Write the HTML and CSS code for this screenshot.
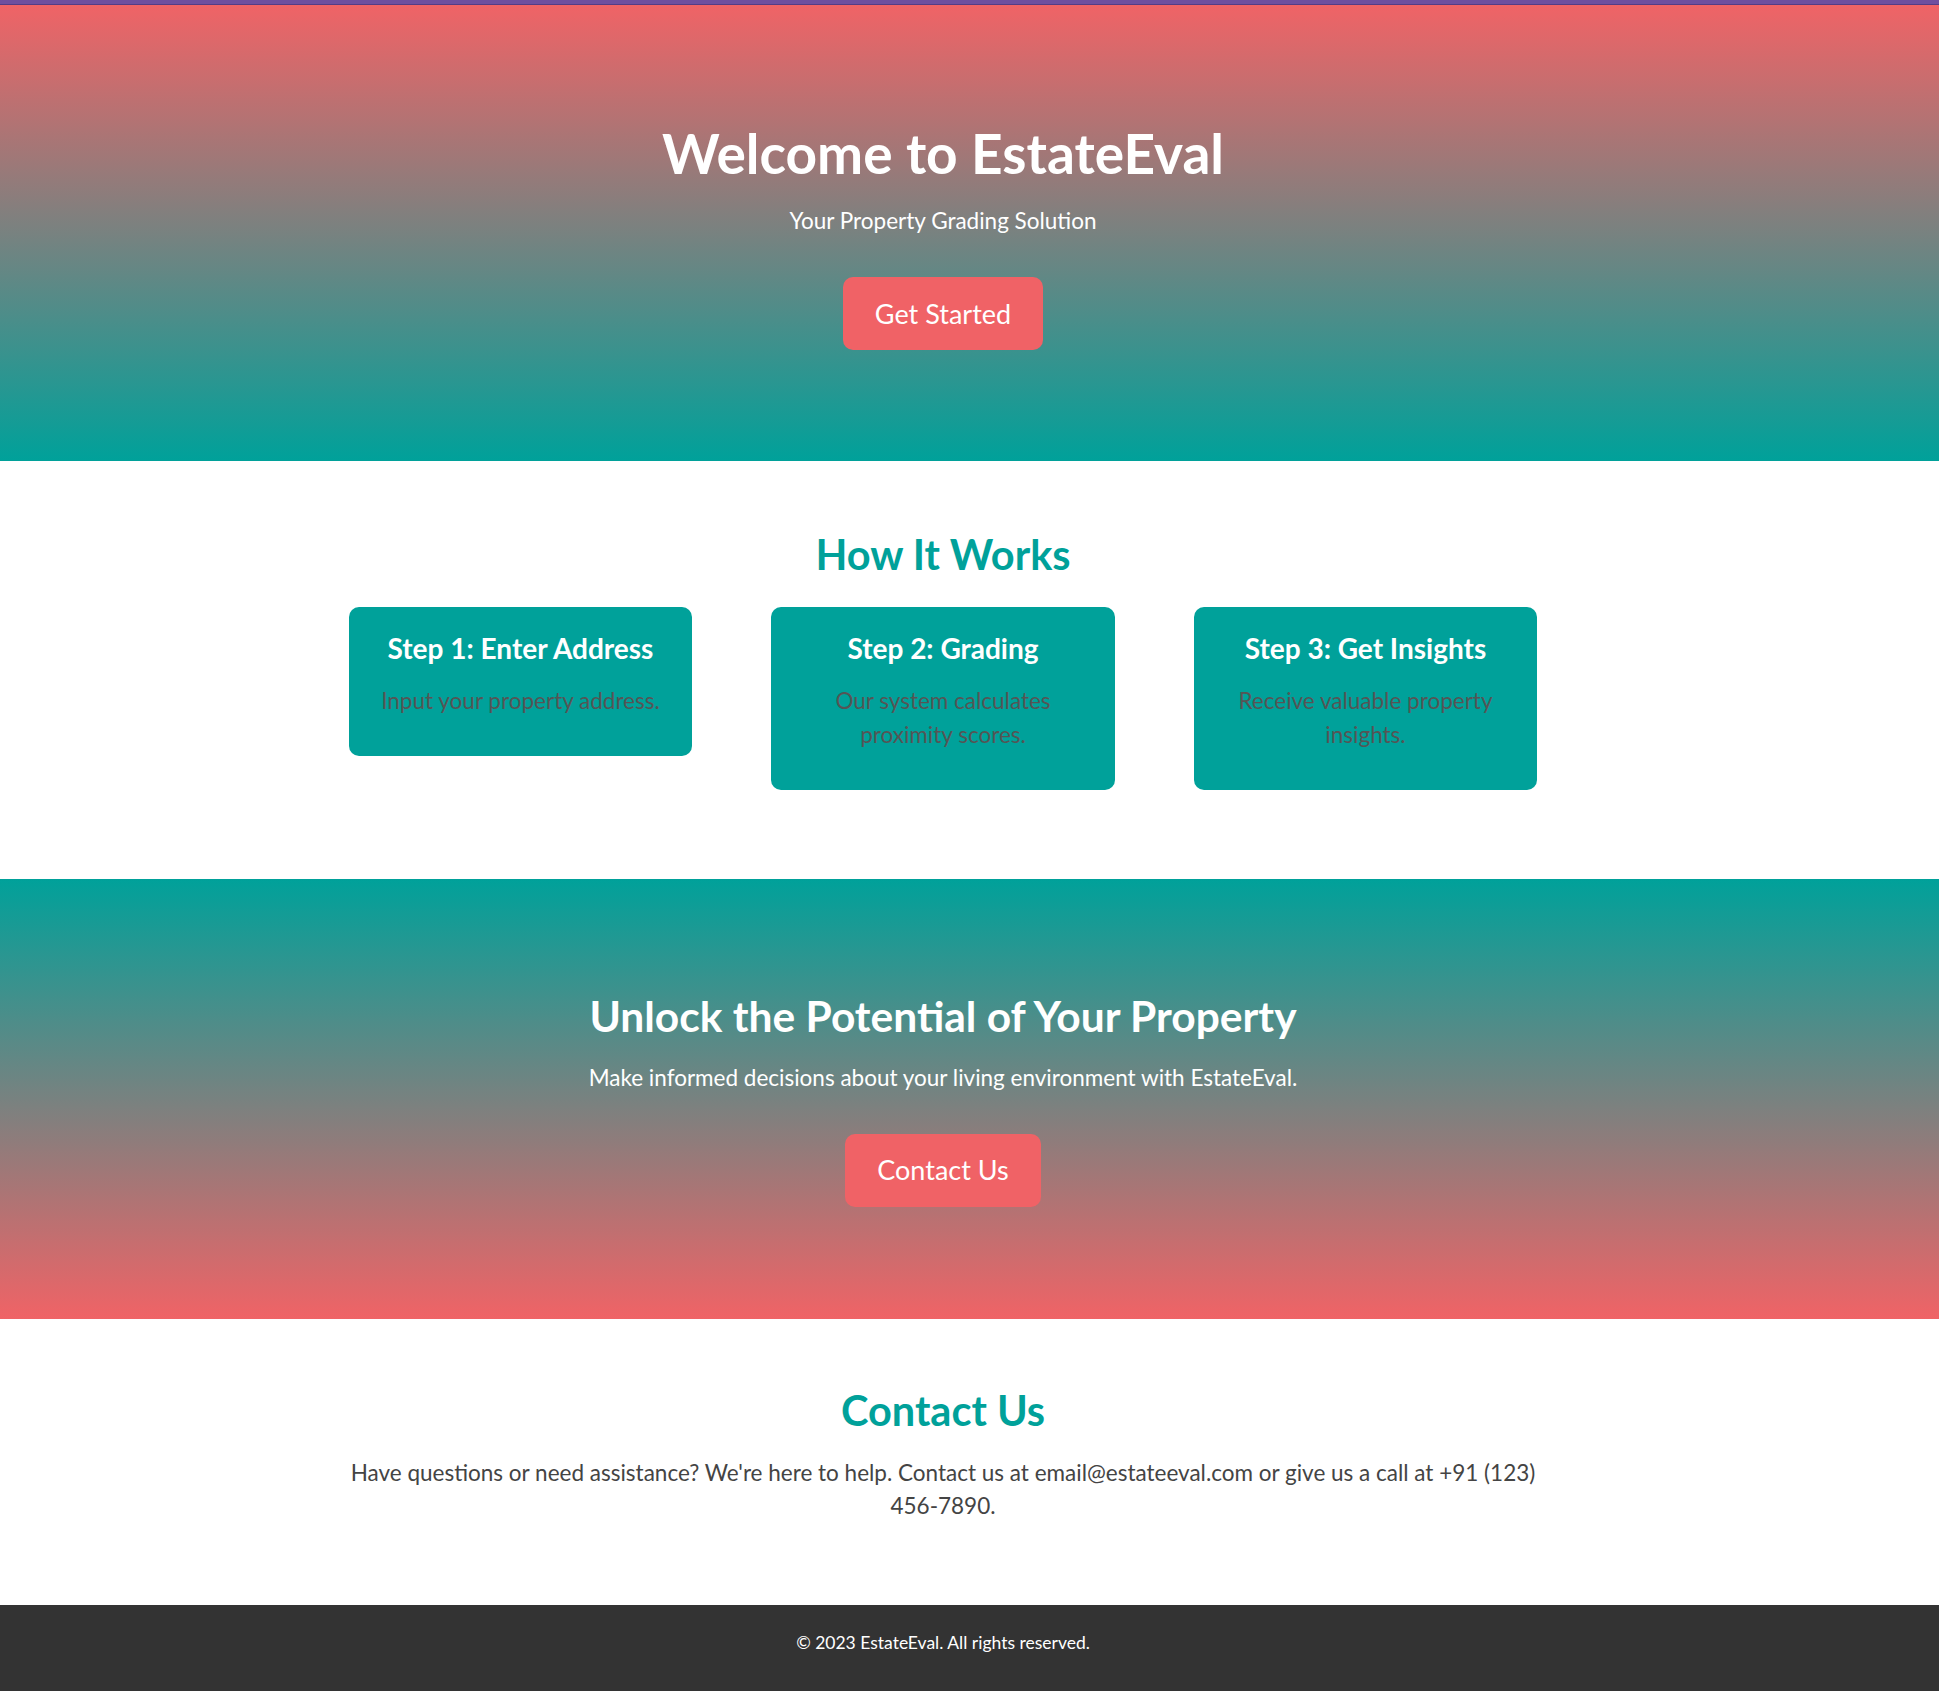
FILE: index.html
```html
<!DOCTYPE html>
<html lang="en">
<head>
<meta charset="utf-8">
<title>EstateEval</title>
<link rel="stylesheet" href="styles.css">
</head>
<body>
<div class="top-bar"></div>
<header class="hero">
  <h1 class="hero-title">Welcome to EstateEval</h1>
  <p class="hero-sub">Your Property Grading Solution</p>
  <a class="btn" href="#contact">Get Started</a>
</header>

<section class="how">
  <h2 class="section-title">How It Works</h2>
  <div class="steps">
    <div class="step">
      <h3 class="step-title">Step 1: Enter Address</h3>
      <p class="step-text">Input your property address.</p>
    </div>
    <div class="step">
      <h3 class="step-title">Step 2: Grading</h3>
      <p class="step-text">Our system calculates proximity scores.</p>
    </div>
    <div class="step">
      <h3 class="step-title">Step 3: Get Insights</h3>
      <p class="step-text">Receive valuable property insights.</p>
    </div>
  </div>
</section>

<section class="cta">
  <h2 class="cta-title">Unlock the Potential of Your Property</h2>
  <p class="cta-text">Make informed decisions about your living environment with EstateEval.</p>
  <a class="btn" href="#contact">Contact Us</a>
</section>

<section class="contact" id="contact">
  <h2 class="section-title">Contact Us</h2>
  <p class="contact-text">Have questions or need assistance? We're here to help. Contact us at email@estateeval.com or give us a call at +91 (123) 456-7890.</p>
</section>

<footer class="footer">
  <p class="footer-text">&copy; 2023 EstateEval. All rights reserved.</p>
</footer>
</body>
</html>
```

FILE: styles.css
```css
* {
  box-sizing: border-box;
}

html, body {
  margin: 0;
  padding: 0;
}

body {
  font-family: Lato, "Open Sans", sans-serif;
  background: #ffffff;
  color: #444444;
}

.top-bar {
  height: 5px;
  background: #6f4f9f;
  border-bottom: 1px solid #553c86;
}

.hero {
  display: flex;
  flex-direction: column;
  align-items: center;
  padding: 112px 53px 111px 0;
  background: linear-gradient(to bottom, #f06366, #00a19a);
  color: #ffffff;
  text-align: center;
}

.hero-title {
  margin: 0 0 15px;
  font-size: 55px;
  line-height: 72px;
  font-weight: 700;
}

.hero-sub {
  margin: 0 0 39px;
  font-size: 22.5px;
  line-height: 34px;
}

.btn {
  display: block;
  padding: 18.5px 32px;
  background: #f06266;
  color: #ffffff;
  font-size: 27px;
  line-height: 36px;
  text-decoration: none;
  border-radius: 10px;
}

.how {
  display: flex;
  flex-direction: column;
  align-items: center;
  padding: 69px 53px 89px 0;
  text-align: center;
}

.section-title {
  margin: 0;
  font-size: 41.5px;
  line-height: 48px;
  font-weight: 700;
  color: #00a19a;
}

.steps {
  display: flex;
  align-items: flex-start;
  gap: 78.75px;
  margin-top: 29px;
}

.step {
  width: 343.75px;
  padding: 25px 25px 38px;
  background: #00a19a;
  border-radius: 10px;
}

.step-title {
  margin: 0 0 19px;
  font-size: 28px;
  line-height: 33px;
  font-weight: 700;
  color: #ffffff;
}

.step-text {
  margin: 0;
  font-size: 22.5px;
  line-height: 33.75px;
  color: #555555;
}

.cta {
  display: flex;
  flex-direction: column;
  align-items: center;
  padding: 113px 53px 112px 0;
  background: linear-gradient(to bottom, #00a19a, #f06366);
  color: #ffffff;
  text-align: center;
}

.cta-title {
  margin: 0 0 21px;
  font-size: 42.5px;
  line-height: 48px;
  font-weight: 700;
}

.cta-text {
  margin: 0 0 39px;
  font-size: 22.5px;
  line-height: 34px;
}

.contact {
  display: flex;
  flex-direction: column;
  align-items: center;
  padding: 67px 53px 82px 0;
  text-align: center;
}

.contact-text {
  max-width: 1220px;
  margin: 22px 0 0;
  font-size: 22.5px;
  line-height: 33.5px;
  color: #444444;
}

.footer {
  padding: 25px 53px 36px 0;
  background: #333333;
  color: #ffffff;
  text-align: center;
}

.footer-text {
  margin: 0;
  font-size: 17.5px;
  line-height: 25px;
}
```
